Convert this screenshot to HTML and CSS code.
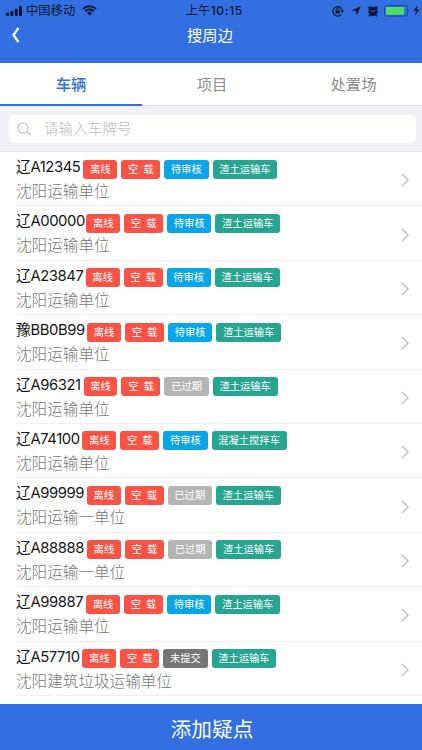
FILE: index.html
```
<!DOCTYPE html>
<html lang="zh-CN">
<head>
<meta charset="utf-8">
<title>搜周边</title>
<link rel="stylesheet" href="styles.css">
</head>
<body>
<header class="header">
  <div class="status">
    <div class="status-left">
      <svg class="signal" width="17" height="10" viewBox="0 0 17 10"><rect x="0" y="6.5" width="3" height="3.5" rx=".8"/><rect x="4.3" y="5" width="3" height="5" rx=".8"/><rect x="8.7" y="2.8" width="3" height="7.2" rx=".8"/><rect x="13" y="0" width="3" height="10" rx=".8"/></svg>
      <span class="carrier">中国移动</span>
      <svg class="wifi" width="15" height="11" viewBox="0 0 15 11"><path d="M1 4C4.600.4 10.400.4 14 4M3.300 6.300C5.600 4 9.400 4 11.700 6.300" fill="none" stroke="#0b1630" stroke-width="2"/><path d="M4.900 7.900Q7.500 5.800 10.100 7.900L7.500 10.600Z"/></svg>
    </div>
    <div class="clock">上午<b>10:15</b></div>
    <div class="status-right">
      <svg width="12" height="12" viewBox="0 0 12 12"><path d="M9.300 9.400A4.700 4.700 0 1 1 10.400 6" fill="none" stroke="#0b1630" stroke-width="1.200"/><path d="M8.600 5.500H12L10.300 8Z"/><rect x="3.500" y="5.300" width="4.400" height="3.300" rx=".4"/><path d="M4.400 5.500V4.300a1.300 1.300 0 0 1 2.600 0V5.500" fill="none" stroke="#0b1630" stroke-width=".9"/></svg>
      <svg class="locate" width="10" height="10" viewBox="0 0 10 10"><path d="M9.700.3L5.800 9.500L5.100 5L.4 4.500Z"/></svg>
      <svg class="alarm" width="12" height="12" viewBox="0 0 12 12"><circle cx="6" cy="6.400" r="4.600"/><path d="M1.400 3.500L3.500 1.300M10.600 3.500L8.500 1.300M3 10L2 11.200M9 10L10 11.200" stroke="#0b1630" stroke-width="1.500"/><path d="M4 5L6 6.800L8.300 5.200" fill="none" stroke="#326fe0" stroke-width="1"/></svg>
      <svg class="battery" width="27" height="12" viewBox="0 0 27 12"><rect x=".6" y=".6" width="22.800" height="10.500" rx="2" fill="none" stroke="#1c4595" stroke-width="1"/><rect x="2" y="2" width="18" height="7.700" rx=".6" fill="#4ddc64"/><path d="M24.500 4Q26.200 5.900 24.500 7.800Z" fill="#1c4595"/></svg>
      <svg width="7" height="11" viewBox="0 0 7 11"><path d="M4.600.5L.4 6H3L1.900 10.500L6.400 4.600H3.700Z"/></svg>
    </div>
  </div>
  <div class="navbar">
    <svg class="back" width="9" height="16" viewBox="0 0 9 16"><path d="M7.500.8L2.500 8L7.500 15.200" fill="none" stroke="#fff" stroke-width="2.300"/></svg>
    <h1 class="title">搜周边</h1>
  </div>
</header>
<nav class="tabs">
  <a class="tab active">车辆</a>
  <a class="tab">项目</a>
  <a class="tab">处置场</a>
</nav>
<div class="search">
  <div class="search-box">
    <svg width="14" height="14" viewBox="0 0 14 14"><path d="M9.800 9.800L13.200 13.200M11 6A5 5 0 1 1 1 6A5 5 0 1 1 11 6Z" fill="none" stroke="#bcbcc2" stroke-width="1.100"/></svg>
    <span>请输入车牌号</span>
  </div>
</div>
<main class="list">
  <div class="row"><div class="info"><div class="line"><span class="plate" style="width:67.3px">辽A12345</span><span class="tag red">离线</span><span class="tag red load">空<i></i>载</span><span class="tag blue">待审核</span><span class="tag green">渣土运输车</span></div><div class="org">沈阳运输单位</div></div><svg class="arrow" viewBox="0 0 8 14"><path d="M1 1L7 7L1 13"/></svg></div>
  <div class="row"><div class="info"><div class="line"><span class="plate" style="width:70.2px">辽A00000</span><span class="tag red">离线</span><span class="tag red load">空<i></i>载</span><span class="tag blue">待审核</span><span class="tag green">渣土运输车</span></div><div class="org">沈阳运输单位</div></div><svg class="arrow" viewBox="0 0 8 14"><path d="M1 1L7 7L1 13"/></svg></div>
  <div class="row"><div class="info"><div class="line"><span class="plate" style="width:69.6px">辽A23847</span><span class="tag red">离线</span><span class="tag red load">空<i></i>载</span><span class="tag blue">待审核</span><span class="tag green">渣土运输车</span></div><div class="org">沈阳运输单位</div></div><svg class="arrow" viewBox="0 0 8 14"><path d="M1 1L7 7L1 13"/></svg></div>
  <div class="row"><div class="info"><div class="line"><span class="plate" style="width:71px">豫BB0B99</span><span class="tag red">离线</span><span class="tag red load">空<i></i>载</span><span class="tag blue">待审核</span><span class="tag green">渣土运输车</span></div><div class="org">沈阳运输单位</div></div><svg class="arrow" viewBox="0 0 8 14"><path d="M1 1L7 7L1 13"/></svg></div>
  <div class="row"><div class="info"><div class="line"><span class="plate" style="width:67.5px">辽A96321</span><span class="tag red">离线</span><span class="tag red load">空<i></i>载</span><span class="tag silver">已过期</span><span class="tag green">渣土运输车</span></div><div class="org">沈阳运输单位</div></div><svg class="arrow" viewBox="0 0 8 14"><path d="M1 1L7 7L1 13"/></svg></div>
  <div class="row"><div class="info"><div class="line"><span class="plate" style="width:66.3px">辽A74100</span><span class="tag red">离线</span><span class="tag red load">空<i></i>载</span><span class="tag blue">待审核</span><span class="tag green">混凝土搅拌车</span></div><div class="org">沈阳运输单位</div></div><svg class="arrow" viewBox="0 0 8 14"><path d="M1 1L7 7L1 13"/></svg></div>
  <div class="row"><div class="info"><div class="line"><span class="plate" style="width:70.7px">辽A99999</span><span class="tag red">离线</span><span class="tag red load">空<i></i>载</span><span class="tag silver">已过期</span><span class="tag green">渣土运输车</span></div><div class="org">沈阳运输一单位</div></div><svg class="arrow" viewBox="0 0 8 14"><path d="M1 1L7 7L1 13"/></svg></div>
  <div class="row"><div class="info"><div class="line"><span class="plate" style="width:71px">辽A88888</span><span class="tag red">离线</span><span class="tag red load">空<i></i>载</span><span class="tag silver">已过期</span><span class="tag green">渣土运输车</span></div><div class="org">沈阳运输一单位</div></div><svg class="arrow" viewBox="0 0 8 14"><path d="M1 1L7 7L1 13"/></svg></div>
  <div class="row"><div class="info"><div class="line"><span class="plate" style="width:70px">辽A99887</span><span class="tag red">离线</span><span class="tag red load">空<i></i>载</span><span class="tag blue">待审核</span><span class="tag green">渣土运输车</span></div><div class="org">沈阳运输单位</div></div><svg class="arrow" viewBox="0 0 8 14"><path d="M1 1L7 7L1 13"/></svg></div>
  <div class="row"><div class="info"><div class="line"><span class="plate" style="width:66.3px">辽A57710</span><span class="tag red">离线</span><span class="tag red load">空<i></i>载</span><span class="tag gray">未提交</span><span class="tag green">渣土运输车</span></div><div class="org">沈阳建筑垃圾运输单位</div></div><svg class="arrow" viewBox="0 0 8 14"><path d="M1 1L7 7L1 13"/></svg></div>
</main>
<footer class="add">添加疑点</footer>
</body>
</html>
```
FILE: styles.css
```
* { box-sizing: border-box; }
body {
  margin: 0;
  height: 750px;
  display: flex;
  flex-direction: column;
  overflow: hidden;
  background: #fff;
  font-family: Inter, "Noto Sans CJK SC", sans-serif;
}
svg { display: block; flex: none; }
.header { height: 63px; flex: none; background: #326fe0; }
.status {
  height: 21px;
  display: grid;
  grid-template-columns: 1fr auto 1fr;
  align-items: center;
  padding: 0 2px 0 6px;
  color: #0b1630;
  fill: #0b1630;
}
.status-left, .status-right { display: flex; align-items: center; }
.status-right { justify-content: flex-end; }
.carrier { margin: 0 7px 0 3px; font-size: 12.3px; line-height: 20px; }
.clock { padding-left: 3px; font-size: 12px; line-height: 20px; letter-spacing: .3px; }
.clock b { font-weight: 500; letter-spacing: .7px; }
.locate { margin-left: 7px; }
.alarm { margin-left: 6px; }
.battery { margin: 0 2px 0 5px; }
.navbar { height: 29px; display: grid; grid-template-columns: 60px 1fr 62px; align-items: center; }
.back { margin: -2px 0 0 11px; }
.title { margin: 0; text-align: center; color: #fff; font-size: 15.3px; font-weight: 400; line-height: 28px; }
.tabs { height: 43px; flex: none; display: grid; grid-template-columns: 142px 1fr 1fr; border-bottom: 1px solid #dddde0; }
.tab { height: 43px; padding-top: 1px; text-align: center; line-height: 41px; font-size: 15.3px; color: #8c8c8c; }
.tab:last-child { padding-left: 3px; }
.active { color: #326fe0; font-weight: 500; border-bottom: 2px solid #326fe0; }
.search { height: 46px; flex: none; padding: 9px 6px 0 9px; background: #efeff4; border-bottom: 1px solid #e6e6ea; }
.search-box {
  height: 28px;
  display: flex;
  align-items: center;
  gap: 13px;
  padding-left: 8px;
  border-radius: 5px;
  background: #fff;
  color: #bcbcc2;
  font-size: 14.6px;
  font-weight: 300;
}
.search-box span { line-height: 26px; }
.list { flex: 1; }
.row { height: 54.4px; margin-left: 16px; display: flex; align-items: center; border-bottom: 1px solid #eee; }
.info { flex: 1; height: 100%; padding-top: 6px; }
.line { height: 22px; display: flex; align-items: center; gap: 4px; }
.plate { margin-right: -4px; flex: none; white-space: nowrap; font-size: 14.8px; letter-spacing: -.4px; line-height: 20px; color: #161616; position: relative; top: -2px; }
.tag {
  height: 19px;
  padding: 0 6.7px;
  border-radius: 3px;
  color: #fff;
  font-size: 10.3px;
  line-height: 18.5px;
  white-space: nowrap;
}
.load { display: flex; }
.load i { width: 5px; }
.red { background: #fa5346; }
.blue { background: #08a5e8; }
.green { background: #26a590; }
.silver { background: #b5b5b5; }
.gray { background: #757575; }
.org { padding-top: 1px; font-size: 15.6px; line-height: 22px; font-weight: 300; color: #777; }
.arrow { width: 8px; height: 14px; margin-right: 13px; margin-top: 3px; fill: none; stroke: #c4c4c6; stroke-width: 1.5; }
.add { height: 46px; flex: none; padding-left: 2px; background: #326fe0; color: #fff; text-align: center; font-size: 20.7px; line-height: 52px; }
```
